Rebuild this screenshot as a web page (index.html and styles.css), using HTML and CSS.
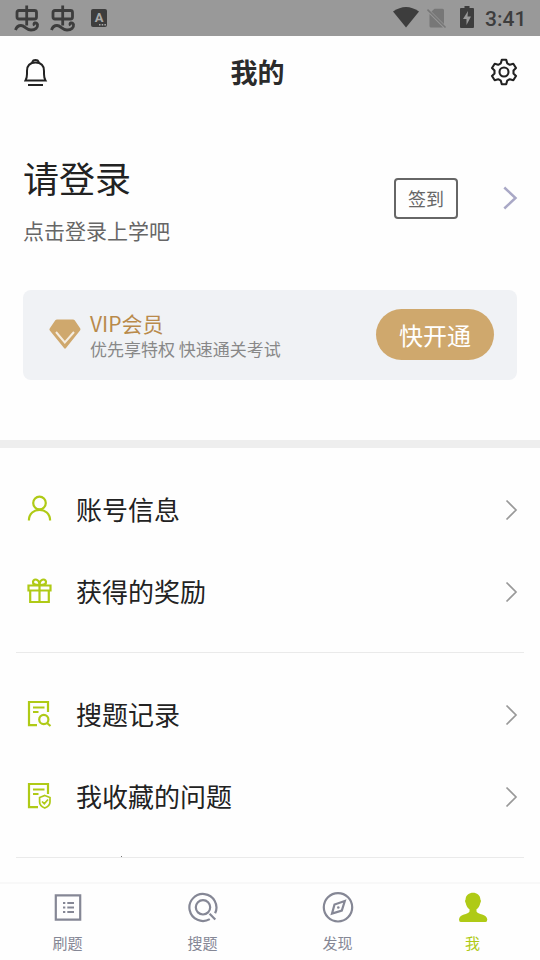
FILE: index.html
```html
<!DOCTYPE html>
<html lang="zh-CN">
<head>
<meta charset="utf-8">
<title>我的</title>
<link rel="stylesheet" href="styles.css">
</head>
<body>
<div class="status">
  <svg class="bug" width="26" height="28" viewBox="0 0 26 28"><path d="M3 7.500Q3 5.500 5 5.500H20.500Q22.500 5.500 22.500 7.500V12Q22.500 14 20.500 14H5Q3 14 3 12ZM12.700 .5V20.500M1.500 25Q3 20.500 7 20.500C11 20.500 12 25 17 25C21.500 25 24 22.500 23.500 19.500C22.500 16.500 18.500 18 20.500 20.500"/></svg>
  <svg class="bug second" width="26" height="28" viewBox="0 0 26 28"><path d="M3 7.500Q3 5.500 5 5.500H20.500Q22.500 5.500 22.500 7.500V12Q22.500 14 20.500 14H5Q3 14 3 12ZM12.700 .5V20.500M1.500 25Q3 20.500 7 20.500C11 20.500 12 25 17 25C21.500 25 24 22.500 23.500 19.500C22.500 16.500 18.500 18 20.500 20.500"/></svg>
  <span class="ime">A<svg width="7" height="2" viewBox="0 0 7 2"><path d="M0 0h1.500v1.500H0zM2.700 0h1.500v1.500H2.700zM5.400 0h1.500v1.500H5.400z" fill="#aaa"/></svg></span>
  <svg class="wifi" width="26" height="21" viewBox="0 0 26 21"><path d="M0 4.500Q13-4.500 26 4.500L13 20.500Z" fill="#3d3d3d"/></svg>
  <svg class="sim" width="20" height="21" viewBox="0 0 20 21"><path d="M7.500 .8H15.500q1.500 0 1.500 1.500V16L4.500 3.500ZM2.500 6L16 19.500H4Q2.500 19.500 2.500 18Z" fill="#777"/><path d="M.5 1.500L18.500 19.500" stroke="#777" stroke-width="1.600"/></svg>
  <svg class="battery" width="14" height="22" viewBox="0 0 14 22"><path d="M4.500 0h5v2H13q1 0 1 1v18q0 1-1 1H1q-1 0-1-1V3q0-1 1-1h3.500Z" fill="#3d3d3d"/><path d="M8 5L3 13h3.500v6L11 10.500H7.500Z" fill="#999"/></svg>
  <span class="clock">3:41</span>
</div>
<header class="header">
  <svg width="24" height="29" viewBox="0 0 24 29" fill="none" stroke="#222" stroke-width="2"><path d="M1.500 22.500Q3 20 3 16V13Q3 4.500 11.500 4.500T20 13V16Q20 20 21.500 22.500ZM8.500 5V3.500Q9 2 11.500 2T14.500 3.500V5M4 27H19"/></svg>
  <h1>我的</h1>
  <svg width="28" height="28" viewBox="0 0 28 28" fill="none" stroke="#222" stroke-width="2.100" stroke-linejoin="round"><path d="M11.800 1.800h4.400l1 3.500 2.600 1.500 3.500-1 2.700 4.200-2.500 2.500v3l2.500 2.500-2.700 4.200-3.500-1-2.600 1.500-1 3.500h-4.400l-1-3.500-2.600-1.500-3.500 1L2 18l2.500-2.500v-3L2 10l2.700-4.200 3.500 1 2.600-1.500Z"/><circle cx="14" cy="14" r="4.500"/></svg>
</header>
<section class="profile">
  <div class="who"><h2>请登录</h2><p>点击登录上学吧</p></div>
  <span class="sign">签到</span>
  <svg class="go" width="16" height="24" viewBox="0 0 16 24"><path d="M2.300 1.500L13.500 12L2.300 22.500" fill="none" stroke="#a9a8c6" stroke-width="2.500"/></svg>
</section>
<section class="vip">
  <svg width="32" height="31" viewBox="0 0 32 31"><path d="M8 .5H24Q25 .5 25.700 1.300L31.300 9.500Q31.800 10.500 31 11.500L17 29Q16 30.500 15 29L.8 11.500Q0 10.500.7 9.500L6.300 1.300Q7 .5 8 .5Z" fill="#cfa86d"/><path d="M7 13L15.800 23.500L25 13" fill="none" stroke="#f5ede0" stroke-width="2"/></svg>
  <div class="vip-text"><h3>VIP会员</h3><p>优先享特权 快速通关考试</p></div>
  <span class="open">快开通</span>
</section>
<main class="menu">
  <div class="group">
    <div class="row"><svg class="icon" width="26" height="28" viewBox="0 0 26 28"><circle cx="12.500" cy="8" r="6.300"/><path d="M1.900 25.500C1.900 11.200 23.100 11.200 23.100 25.500"/></svg><span>账号信息</span><svg class="arrow" width="13" height="22" viewBox="0 0 13 22"><path d="M1.500 1.500L11 11L1.500 20.500"/></svg></div>
    <div class="row"><svg class="icon" width="26" height="28" viewBox="0 0 26 28"><path d="M1.500 8.500H23.500V13.500H1.500ZM3.200 13.500V25H21.800V13.500M12.500 8V25M12.500 8C8 8 5.500 7 6 4.500C7 1 12.500 2 12.500 8C12.500 2 18 1 19 4.500C19.500 7 17 8 12.500 8"/></svg><span>获得的奖励</span><svg class="arrow" width="13" height="22" viewBox="0 0 13 22"><path d="M1.500 1.500L11 11L1.500 20.500"/></svg></div>
  </div>
  <div class="group">
    <div class="row"><svg class="icon" width="26" height="28" viewBox="0 0 26 28"><path d="M10 25.200H2V2H21V12M6 7.500H17.500M6 12H11.500"/><circle cx="16.800" cy="19.500" r="4.600"/><path d="M20 23L23.500 26"/></svg><span>搜题记录</span><svg class="arrow" width="13" height="22" viewBox="0 0 13 22"><path d="M1.500 1.500L11 11L1.500 20.500"/></svg></div>
    <div class="row"><svg class="icon" width="26" height="28" viewBox="0 0 26 28"><path d="M11 25.200H2V2H21V12M6 7.500H17.500M6 12H11.500"/><path class="fine" d="M17.800 13.500L23 15.500V20Q23 24 17.800 26Q12.600 24 12.600 20V15.500ZM15 19.500L17.300 21.700L21 17.500"/></svg><span>我收藏的问题</span><svg class="arrow" width="13" height="22" viewBox="0 0 13 22"><path d="M1.500 1.500L11 11L1.500 20.500"/></svg></div>
    <i class="speck"></i>
  </div>
</main>
<nav class="tabs">
  <div class="tab"><svg width="32" height="32" viewBox="0 0 32 32"><path d="M3.800 4.300H28.200V28.700H3.800ZM11 12h2.300M15.300 12H22M11 16.500h2.300M15.300 16.500H22M11 21h2.300M15.300 21H22"/></svg><span>刷题</span></div>
  <div class="tab"><svg width="32" height="32" viewBox="0 0 32 32"><path d="M22.800 28.100A13.500 13.500 0 1 1 28.100 22.300"/><circle cx="16" cy="16.300" r="7.200"/><path d="M22.600 22.800L28.300 28.500"/></svg><span>搜题</span></div>
  <div class="tab"><svg width="32" height="32" viewBox="0 0 32 32"><circle cx="16" cy="16.300" r="14.200"/><path d="M22.800 10L12.500 13.500L10 22.600L19.800 19.500Z"/><circle class="dot" cx="16.300" cy="16.500" r="1.300"/></svg><span>发现</span></div>
  <div class="tab active"><svg width="32" height="32" viewBox="0 0 32 32"><path d="M8.600 8.500C8.600 -.5 23.400 -.5 23.400 8.500Q24.500 10 23.300 12C22.700 15 21.500 17 19.500 18.300V20.500C20.500 23.500 30 23 30.300 28.500Q30.300 31 28.500 31H3.800Q2 31 2 28.500C2.300 23 11.500 23.500 12.500 20.500V18.300C10.500 17 9.300 15 8.700 12Q7.500 10 8.600 8.500Z"/></svg><span>我</span></div>
</nav>
</body>
</html>
```
FILE: styles.css
```css
* { box-sizing: border-box; }
body {
  margin: 0;
  width: 540px;
  height: 960px;
  overflow: hidden;
  display: flex;
  flex-direction: column;
  background: #fefefe;
  color: #222;
  font-family: "Noto Sans CJK SC", sans-serif;
}
h1, h2, h3, p { margin: 0; font-weight: 400; }
svg { display: block; flex: none; }

.status {
  flex: none;
  height: 36px;
  background: #999;
  display: flex;
  align-items: center;
  padding: 0 13px 0 14px;
}
.bug { fill: none; stroke: #3d3d3d; stroke-width: 2.8; margin-top: 2px; }
.second { margin-left: 10px; }
.ime {
  width: 16px;
  height: 18px;
  margin-left: 15px;
  border-radius: 2px;
  background: #3d3d3d;
  color: #aaa;
  font: bold 13px/17px Roboto, sans-serif;
  text-align: center;
  position: relative;
}
.ime svg { position: absolute; right: 1px; bottom: 1px; }
.wifi { margin-left: auto; margin-top: -1px; }
.sim { margin: 0 13px 0 8px; }
.battery { margin-top: -2px; }
.clock {
  width: 42px;
  margin-left: 11px;
  color: #3d3d3d;
  font: 500 21px/36px Roboto, sans-serif;
  white-space: nowrap;
  padding-top: 2px;
}

.header {
  flex: none;
  height: 72px;
  padding: 0 22px 0 24px;
  display: flex;
  align-items: center;
  justify-content: space-between;
}
.header h1 { font-size: 27px; font-weight: 700; line-height: 40px; margin-right: 23px; color: #2b2b2b; }

.profile {
  flex: none;
  height: 182px;
  padding: 0 22px 2px 23px;
  display: flex;
  align-items: center;
}
.who { flex: 1; margin-top: -1px; }
.who h2 { font-size: 36px; line-height: 54px; }
.who p { font-size: 21px; line-height: 32px; margin-top: 10px; color: #666; }
.sign {
  width: 64px;
  height: 41px;
  border: 2px solid #666;
  border-radius: 4px;
  color: #666;
  font-size: 18px;
  line-height: 37px;
  text-align: center;
}
.go { margin-left: 44px; }

.vip {
  flex: none;
  height: 90px;
  margin: 0 23px 60px;
  padding: 0 23px 1px 26px;
  border-radius: 8px;
  background: #f0f2f5;
  display: flex;
  align-items: center;
}
.vip-text { flex: 1; margin: 2px 0 0 9px; }
.vip-text h3 { font-size: 21px; line-height: 26px; color: #b98a4b; }
.vip-text p { font-size: 17px; line-height: 24px; margin-top: 1px; color: #888; white-space: nowrap; }
.open {
  width: 118px;
  height: 51px;
  border-radius: 26px;
  background: #cfa86d;
  color: #fff;
  font-size: 24px;
  line-height: 51px;
  text-align: center;
}

.menu { flex: 1; min-height: 0; border-top: 8px solid #eee; }
.group { margin: 0 16px; padding: 20px 0; border-bottom: 1px solid #eaeaea; position: relative; }
.row { height: 82px; padding: 0 6px 0 11px; display: flex; align-items: center; }
.row span { flex: 1; margin-left: 23px; font-size: 26px; line-height: 40px; }
.icon { fill: none; stroke: #afca16; stroke-width: 2.2; margin-top: -1px; }
.icon .fine { stroke-width: 1.7; }
.arrow { fill: none; stroke: #999; stroke-width: 1.7; margin-top: 1px; }
.speck { position: absolute; left: 105px; bottom: 0; width: 1px; height: 1px; background: #777; }

.tabs { flex: none; height: 78px; border-top: 2px solid #f8f8f8; display: flex; }
.tab { flex: 1; display: flex; flex-direction: column; align-items: center; padding-top: 7px; color: #858795; }
.tab svg { fill: none; stroke: #858795; stroke-width: 2.2; }
.tab .dot { fill: #858795; stroke: none; }
.tab span { margin-top: 9px; font-size: 15px; line-height: 22px; }
.active { color: #afca16; }
.tab.active svg { fill: #afca16; stroke: none; }
```
